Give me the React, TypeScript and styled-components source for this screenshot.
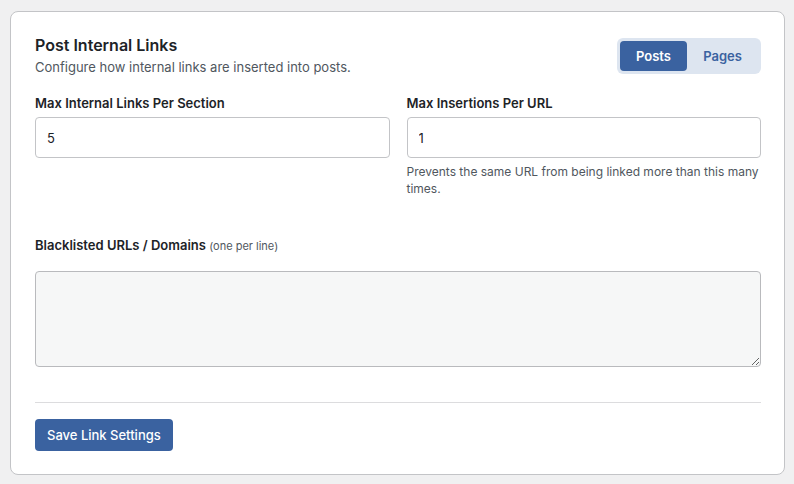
import React, { FC, useState } from 'react';
import styled, { createGlobalStyle } from 'styled-components';

const GlobalStyle = createGlobalStyle`
  html, body {
    margin: 0;
    padding: 0;
    background: #f0f0f1;
  }

  body {
    font-family: Inter, "Noto Sans", "Liberation Sans", sans-serif;
    color: #1d2327;
    -webkit-font-smoothing: antialiased;
  }
`;

type PostType = 'posts' | 'pages';

const App: FC = () => {
  const [postType, setPostType] = useState<PostType>('posts');
  const [maxPerSection, setMaxPerSection] = useState('5');
  const [maxPerUrl, setMaxPerUrl] = useState('1');
  const [blacklist, setBlacklist] = useState('');

  return (
    <>
      <GlobalStyle />
      <Page>
        <Card>
          <Header>
            <div>
              <Title>Post Internal Links</Title>
              <Subtitle>Configure how internal links are inserted into posts.</Subtitle>
            </div>
            <Toggle>
              <ToggleButton $active={postType === 'posts'} onClick={() => setPostType('posts')}>
                Posts
              </ToggleButton>
              <ToggleButton $active={postType === 'pages'} onClick={() => setPostType('pages')}>
                Pages
              </ToggleButton>
            </Toggle>
          </Header>

          <FieldGrid>
            <Field>
              <Label>Max Internal Links Per Section</Label>
              <Input value={maxPerSection} onChange={(e) => setMaxPerSection(e.target.value)} />
            </Field>
            <Field>
              <Label>Max Insertions Per URL</Label>
              <Input value={maxPerUrl} onChange={(e) => setMaxPerUrl(e.target.value)} />
              <Hint>Prevents the same URL from being linked more than this many times.</Hint>
            </Field>
          </FieldGrid>

          <BlacklistField>
            <Label>
              Blacklisted URLs / Domains <LabelNote>(one per line)</LabelNote>
            </Label>
            <TextArea value={blacklist} onChange={(e) => setBlacklist(e.target.value)} />
          </BlacklistField>

          <Footer>
            <SaveButton>Save Link Settings</SaveButton>
          </Footer>
        </Card>
      </Page>
    </>
  );
};

export default App;

const Page = styled.div`
  padding: 11px 9px 10px 10px;
`;

const Card = styled.div`
  background: #fff;
  border: 1px solid #c3c4c7;
  border-radius: 8px;
  padding: 23px 23px 23px 24px;
`;

const Header = styled.div`
  display: flex;
  justify-content: space-between;
  align-items: flex-start;
`;

const Title = styled.h2`
  margin: 0;
  font-size: 16px;
  line-height: 20px;
  font-weight: 600;
  color: #1d2327;
`;

const Subtitle = styled.p`
  margin: 3px 0 0;
  font-size: 13px;
  line-height: 18px;
  color: #50575e;
`;

const Toggle = styled.div`
  display: flex;
  padding: 3px;
  margin-top: 3px;
  border-radius: 6px;
  background: #dde5f0;
`;

const ToggleButton = styled.button<{ $active: boolean }>`
  width: ${({ $active }) => ($active ? '67px' : '71px')};
  height: 30px;
  border: 0;
  border-radius: 4px;
  font-family: inherit;
  font-size: 13px;
  font-weight: 600;
  cursor: pointer;
  background: ${({ $active }) => ($active ? '#3a62a0' : 'transparent')};
  color: ${({ $active }) => ($active ? '#fff' : '#3a62a0')};
`;

const FieldGrid = styled.div`
  display: grid;
  grid-template-columns: 1fr 1fr;
  column-gap: 17px;
  margin-top: 18px;
`;

const Field = styled.div`
  display: flex;
  flex-direction: column;
`;

const Label = styled.label`
  display: block;
  font-size: 13px;
  line-height: 18px;
  font-weight: 600;
  color: #1d2327;
  margin-bottom: 5px;
`;

const LabelNote = styled.span`
  font-size: 11px;
  font-weight: 400;
  color: #50575e;
`;

const Input = styled.input`
  box-sizing: border-box;
  width: 100%;
  height: 41px;
  padding: 0 11px;
  border: 1px solid #c3c4c7;
  border-radius: 4px;
  font-family: inherit;
  font-size: 13px;
  color: #1d2327;
  background: #fff;
  outline: none;
`;

const Hint = styled.p`
  margin: 5px 0 0;
  font-size: 12px;
  line-height: 17px;
  color: #50575e;
`;

const BlacklistField = styled.div`
  margin-top: 39px;
`;

const TextArea = styled.textarea`
  display: block;
  box-sizing: border-box;
  width: 100%;
  height: 96px;
  margin-top: 16px;
  padding: 8px 12px;
  border: 1px solid #b9babd;
  border-radius: 4px;
  background: #f6f7f7;
  font-family: inherit;
  font-size: 13px;
  outline: none;
`;

const Footer = styled.div`
  margin-top: 35px;
  padding-top: 16px;
  border-top: 1px solid #dcdcde;
`;

const SaveButton = styled.button`
  height: 32px;
  padding: 0 12px;
  border: 0;
  border-radius: 4px;
  background: #3a62a0;
  color: #fff;
  font-family: inherit;
  font-size: 13px;
  font-weight: 500;
  cursor: pointer;
`;
